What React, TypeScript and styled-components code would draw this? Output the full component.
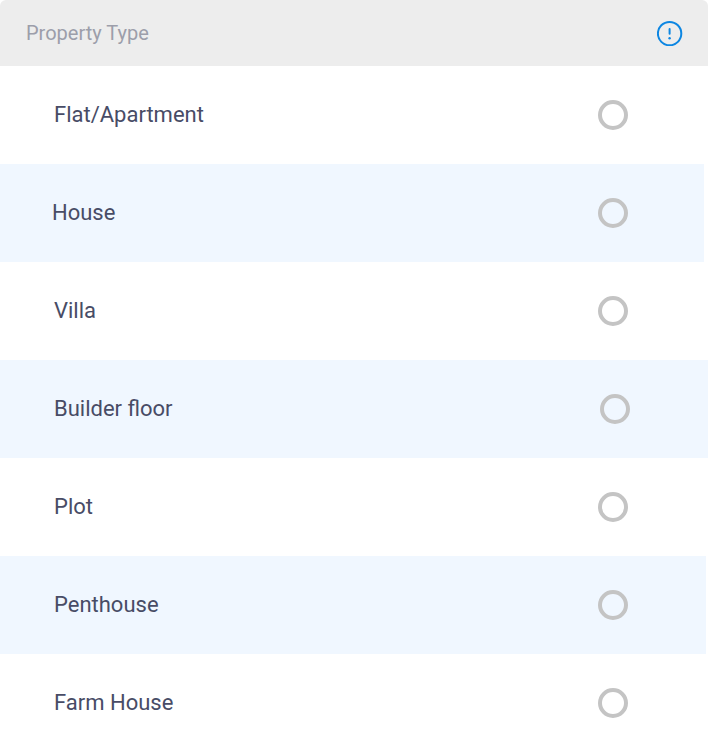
import React from "react";
import styled, { createGlobalStyle } from "styled-components";

const GlobalStyle = createGlobalStyle`
  * { box-sizing: border-box; }
  body { margin: 0; background: #ffffff; font-family: Roboto, "Liberation Sans", sans-serif; }
`;

const Panel = styled.fieldset`
  margin: 0;
  padding: 0;
  border: 0;
  min-width: 0;
`;

const Header = styled.header`
  display: flex;
  align-items: center;
  justify-content: space-between;
  height: 66px;
  padding: 0 25px 0 26px;
  background: #ededed;
  border-radius: 6px 6px 0 0;
`;

const Title = styled.h1`
  margin: 0;
  font-size: 20px;
  line-height: 24px;
  font-weight: 400;
  color: #9c9eaa;
`;

const InfoButton = styled.button`
  display: flex;
  padding: 0;
  border: 0;
  background: none;
  cursor: pointer;
`;

const Row = styled.label<{ $shaded: boolean; $inset: number; $start: number; $end: number }>`
  display: flex;
  align-items: center;
  justify-content: space-between;
  height: 98px;
  margin-right: ${(p) => p.$inset}px;
  padding-left: ${(p) => p.$start}px;
  padding-right: ${(p) => p.$end - p.$inset}px;
  background: ${(p) => (p.$shaded ? "#f0f7ff" : "#ffffff")};
  font-size: 22px;
  line-height: 26px;
  color: #484c66;
  cursor: pointer;
`;

const Radio = styled.input`
  appearance: none;
  width: 30px;
  height: 30px;
  margin: 0;
  border: 4px solid #c4c4c4;
  border-radius: 50%;
  cursor: pointer;

  &:checked {
    border-color: #0c86e2;
    background: radial-gradient(#0c86e2 45%, transparent 50%);
  }
`;

const options = [
  { label: "Flat/Apartment" },
  { label: "House", inset: 4, start: 52 },
  { label: "Villa" },
  { label: "Builder floor", end: 78 },
  { label: "Plot" },
  { label: "Penthouse", inset: 2 },
  { label: "Farm House" },
];

export default function App() {
  return (
    <>
      <GlobalStyle />
      <Panel aria-labelledby="property-type">
        <Header>
          <Title id="property-type">Property Type</Title>
          <InfoButton type="button" aria-label="About property types">
            <svg width="26" height="26" viewBox="0 0 26 26" fill="none">
              <circle cx="12.6" cy="13.6" r="11.7" stroke="#0c86e2" strokeWidth="2" />
              <path d="M12.6 9v4.8" stroke="#0c86e2" strokeWidth="2" strokeLinecap="round" />
              <circle cx="12.6" cy="18.2" r="1.2" fill="#0c86e2" />
            </svg>
          </InfoButton>
        </Header>
        {options.map(({ label, inset = 0, start = 54, end = 80 }, index) => (
          <Row key={label} $shaded={index % 2 === 1} $inset={inset} $start={start} $end={end}>
            {label}
            <Radio type="radio" name="property-type" value={label} />
          </Row>
        ))}
      </Panel>
    </>
  );
}
